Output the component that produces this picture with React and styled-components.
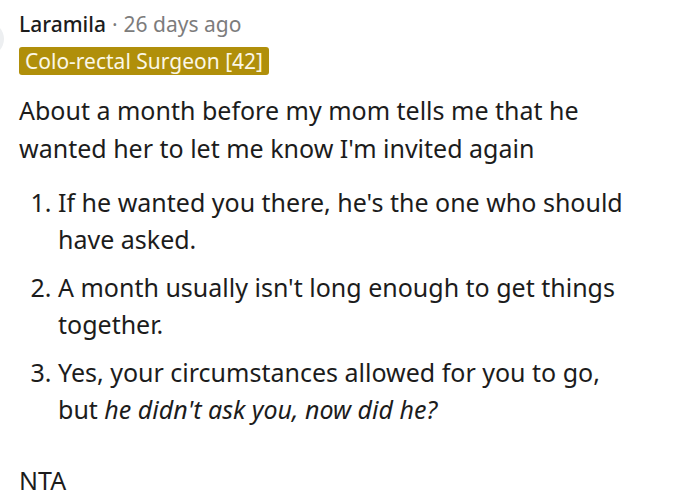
import React from 'react'
import styled, { createGlobalStyle } from 'styled-components';

const GlobalStyle = createGlobalStyle`
    body{
        margin: 0;
        background: #ffffff;
        font-family: "Noto Sans", "Open Sans", sans-serif;
    }
`;

function App() {
    return (
        <CommentStyled>
            <GlobalStyle />
            <div className="avatar"></div>
            <div className="meta">
                <span className="author">Laramila</span>
                <span className="dot">·</span>
                <span className="time">26 days ago</span>
            </div>
            <Flair>Colo-rectal Surgeon [42]</Flair>
            <Body>
                <p>About a month before my mom tells me that he wanted her to let me know I'm invited again</p>
                <ol>
                    <li>If he wanted you there, he's the one who should have asked.</li>
                    <li>A month usually isn't long enough to get things together.</li>
                    <li>Yes, your circumstances allowed for you to go, but <em>he didn't ask you, now did he?</em></li>
                </ol>
                <p>NTA</p>
            </Body>
        </CommentStyled>
    )
}

const CommentStyled = styled.div`
    position: relative;
    padding: 10px 0 0 19px;
    height: 497px;
    box-sizing: border-box;
    overflow: hidden;
    .avatar{
        position: absolute;
        left: -30px;
        top: 22px;
        width: 34px;
        height: 34px;
        border-radius: 50%;
        background: #edeff1;
    }
    .meta{
        display: flex;
        align-items: baseline;
        gap: 6px;
        font-family: "Noto Sans", sans-serif;
        font-size: 21px;
        line-height: 28px;
        .author{
            color: #1c1c1c;
            font-weight: 500;
        }
        .dot, .time{
            color: #7c7c7c;
        }
    }
`;

const Flair = styled.div`
    width: fit-content;
    margin-top: 9px;
    padding: 0 6px;
    background: #b08f0a;
    color: #fbf7e6;
    border-radius: 3px;
    font-size: 21px;
    line-height: 28px;
    font-family: "Noto Sans", sans-serif;
`;

const Body = styled.div`
    margin-top: 16px;
    padding-right: 64px;
    color: #1c1c1c;
    font-size: 25px;
    line-height: 38px;
    p{
        margin: 0;
    }
    ol{
        margin: 17px 0 33px;
        padding-left: 39px;
        li{
            line-height: 37px;
            margin-bottom: 11px;
        }
        li:last-child{
            margin-bottom: 0;
        }
    }
`;

export default App;
